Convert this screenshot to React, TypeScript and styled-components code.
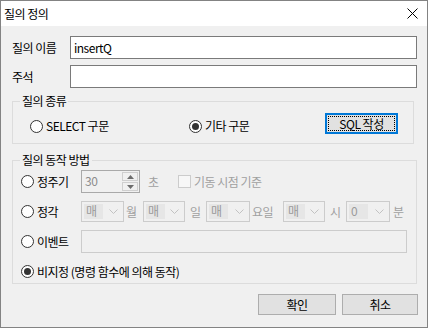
import React from 'react';
import styled, { createGlobalStyle } from 'styled-components';

const GlobalStyle = createGlobalStyle`
  html, body {
    margin: 0;
    padding: 0;
    background: #f0f0f0;
  }
  body {
    font-family: "Noto Sans CJK KR", "Noto Sans", sans-serif;
    font-size: 12px;
    letter-spacing: -0.5px;
    color: #000;
  }
`;

const Window = styled.div`
  width: 428px;
  height: 328px;
  box-sizing: border-box;
  border: 1px solid #838383;
  background: #f0f0f0;
  display: flex;
  flex-direction: column;
`;

const TitleBar = styled.div`
  height: 25px;
  background: #fff;
  display: flex;
  align-items: center;
  justify-content: space-between;
  padding: 0 9px 0 3px;
  font-size: 12px;
  line-height: 14px;
`;

const Body = styled.div`
  display: flex;
  flex-direction: column;
  padding: 10px 9px 0 11px;
`;

const FieldRow = styled.div`
  display: flex;
  align-items: center;
  height: 23px;
  margin-bottom: 6px;
`;

const FieldLabel = styled.span`
  width: 58px;
  line-height: 14px;
`;

const TextBox = styled.div<{ $disabled?: boolean; $w: number }>`
  box-sizing: border-box;
  width: ${p => p.$w}px;
  height: 23px;
  border: 1px solid ${p => (p.$disabled ? '#cccccc' : '#7a7a7a')};
  background: ${p => (p.$disabled ? '#f0f0f0' : '#fff')};
  display: flex;
  align-items: center;
  padding-left: 3px;
  line-height: 14px;
`;

const Group = styled.fieldset<{ $w: number }>`
  box-sizing: border-box;
  width: ${p => p.$w}px;
  margin: 0;
  padding: 0;
  border: 1px solid #dcdcdc;
  min-width: 0;
`;

const Legend = styled.legend`
  margin-left: 7px;
  padding: 0 2px;
  line-height: 14px;
  font-size: 12px;
`;

const KindRow = styled.div`
  display: flex;
  align-items: flex-start;
  padding: 5px 0 7px 17px;
`;

const RadioItem = styled.label<{ $w?: number; $mt?: number }>`
  display: flex;
  align-items: center;
  gap: 3px;
  height: 20px;
  width: ${p => (p.$w ? `${p.$w}px` : 'auto')};
  margin-top: ${p => p.$mt ?? 0}px;
  line-height: 14px;
`;

const RadioCircle = styled.span<{ $checked?: boolean }>`
  box-sizing: border-box;
  width: 13px;
  height: 13px;
  border-radius: 50%;
  border: 1px solid #333;
  background: #fff;
  display: flex;
  align-items: center;
  justify-content: center;
  flex: none;
  &::after {
    content: '';
    width: 7px;
    height: 7px;
    border-radius: 50%;
    background: ${p => (p.$checked ? '#333' : 'transparent')};
  }
`;

const Button = styled.div<{ $w: number; $focused?: boolean }>`
  box-sizing: border-box;
  width: ${p => p.$w}px;
  height: 21px;
  background: #e1e1e1;
  border: ${p => (p.$focused ? '2px solid #0078d7' : '1px solid #adadad')};
  display: flex;
  align-items: center;
  justify-content: center;
  line-height: 14px;
  position: relative;
  ${p =>
    p.$focused &&
    `&::before {
      content: '';
      position: absolute;
      inset: 1px;
      border: 1px dotted #000;
    }`}
`;

const ModeList = styled.div`
  display: flex;
  flex-direction: column;
  padding: 3px 0 0 8px;
`;

const ModeRow = styled.div<{ $h: number; $mb: number }>`
  display: flex;
  align-items: center;
  height: ${p => p.$h}px;
  margin-bottom: ${p => p.$mb}px;
`;

const ModeRadio = styled(RadioItem)`
  width: 60px;
  height: auto;
`;

const Spin = styled.div`
  box-sizing: border-box;
  width: 59px;
  height: 23px;
  border: 1px solid #a9a9a9;
  display: flex;
  justify-content: space-between;
  color: #8c8c8c;
`;

const SpinValue = styled.span`
  padding: 3px 0 0 3px;
  line-height: 14px;
`;

const SpinButtons = styled.div`
  display: flex;
  flex-direction: column;
  width: 16px;
  padding: 1px 1px 1px 0;
  gap: 1px;
`;

const SpinBtn = styled.div`
  flex: 1;
  border: 1px solid #cfcfcf;
  background: #f0f0f0;
  display: flex;
  align-items: center;
  justify-content: center;
`;

const Muted = styled.span<{ $w?: number; $pl?: number }>`
  color: #a0a0a0;
  line-height: 14px;
  width: ${p => (p.$w ? `${p.$w}px` : 'auto')};
  padding-left: ${p => p.$pl ?? 0}px;
  box-sizing: border-box;
  flex: none;
`;

const CheckBox = styled.span`
  box-sizing: border-box;
  width: 13px;
  height: 13px;
  border: 1px solid #cccccc;
  background: #f7f7f7;
  margin-right: 3px;
  flex: none;
`;

const Combo = styled.div<{ $w: number }>`
  box-sizing: border-box;
  width: ${p => p.$w}px;
  height: 21px;
  border: 1px solid #cccccc;
  display: flex;
  align-items: center;
  justify-content: space-between;
  padding: 0 5px 0 2px;
  flex: none;
`;

const ComboValue = styled.span`
  background: #e6e6e6;
  color: #9a9a9a;
  width: 19px;
  height: 15px;
  line-height: 14px;
  padding-left: 2px;
  box-sizing: border-box;
`;

const Footer = styled.div`
  display: flex;
  justify-content: flex-end;
  gap: 6px;
  padding-top: 10px;
`;

const Chevron = () => (
  <svg width="9" height="5" viewBox="0 0 9 5">
    <path d="M0.5 0.5 L4.5 4.5 L8.5 0.5" fill="none" stroke="#c2c2c2" strokeWidth="1" />
  </svg>
);

const Arrow = ({ up }: { up?: boolean }) => (
  <svg width="7" height="4" viewBox="0 0 7 4">
    <path d={up ? 'M0 4 L3.5 0 L7 4 Z' : 'M0 0 L3.5 4 L7 0 Z'} fill="#6d6d6d" />
  </svg>
);

const combos = [
  { w: 43, value: '매', unit: '월', uw: 19, pl: 2 },
  { w: 42, value: '매', unit: '일', uw: 21, pl: 5 },
  { w: 44, value: '매', unit: '요일', uw: 33, pl: 2 },
  { w: 42, value: '매', unit: '시', uw: 21, pl: 5 },
  { w: 44, value: '0', unit: '분', uw: 20, pl: 3 },
];

const App: React.FC = () => {
  return (
    <>
      <GlobalStyle />
      <Window>
        <TitleBar>
          <span>질의 정의</span>
          <svg width="11" height="11" viewBox="0 0 11 11">
            <path d="M0.5 0.5 L10.5 10.5 M10.5 0.5 L0.5 10.5" stroke="#000" strokeWidth="1" />
          </svg>
        </TitleBar>
        <Body>
          <FieldRow>
            <FieldLabel>질의 이름</FieldLabel>
            <TextBox $w={347}>insertQ</TextBox>
          </FieldRow>
          <FieldRow>
            <FieldLabel>주석</FieldLabel>
            <TextBox $w={347} />
          </FieldRow>

          <Group $w={402}>
            <Legend>질의 종류</Legend>
            <KindRow>
              <RadioItem $w={159} $mt={3}>
                <RadioCircle />
                SELECT 구문
              </RadioItem>
              <RadioItem $w={136} $mt={3}>
                <RadioCircle $checked />
                기타 구문
              </RadioItem>
              <Button $w={73} $focused>
                SQL 작성
              </Button>
            </KindRow>
          </Group>

          <Group $w={405} style={{ marginTop: 9 }}>
            <Legend>질의 동작 방법</Legend>
            <ModeList>
              <ModeRow $h={23} $mb={8}>
                <ModeRadio>
                  <RadioCircle />
                  정주기
                </ModeRadio>
                <Spin>
                  <SpinValue>30</SpinValue>
                  <SpinButtons>
                    <SpinBtn>
                      <Arrow up />
                    </SpinBtn>
                    <SpinBtn>
                      <Arrow />
                    </SpinBtn>
                  </SpinButtons>
                </Spin>
                <Muted $w={38} $pl={8}>
                  초
                </Muted>
                <CheckBox />
                <Muted>기동 시점 기준</Muted>
              </ModeRow>
              <ModeRow $h={21} $mb={8}>
                <ModeRadio>
                  <RadioCircle />
                  정각
                </ModeRadio>
                {combos.map((c, i) => (
                  <React.Fragment key={i}>
                    <Combo $w={c.w}>
                      <ComboValue>{c.value}</ComboValue>
                      <Chevron />
                    </Combo>
                    <Muted $w={c.uw} $pl={c.pl}>
                      {c.unit}
                    </Muted>
                  </React.Fragment>
                ))}
              </ModeRow>
              <ModeRow $h={23} $mb={7}>
                <ModeRadio>
                  <RadioCircle />
                  이벤트
                </ModeRadio>
                <TextBox $w={326} $disabled />
              </ModeRow>
              <ModeRow $h={23} $mb={0}>
                <RadioItem>
                  <RadioCircle $checked />
                  비지정 (명령 함수에 의해 동작)
                </RadioItem>
              </ModeRow>
            </ModeList>
          </Group>

          <Footer>
            <Button $w={78}>확인</Button>
            <Button $w={76}>취소</Button>
          </Footer>
        </Body>
      </Window>
    </>
  );
};

export default App;
